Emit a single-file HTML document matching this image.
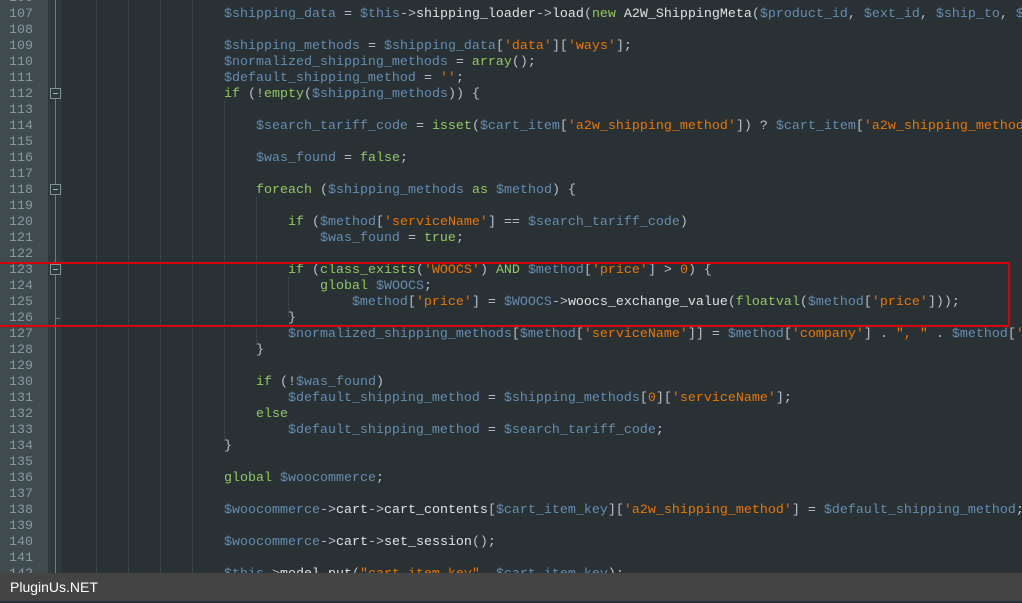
<!DOCTYPE html>
<html><head><meta charset="utf-8"><style>
html,body{margin:0;padding:0;}
body{width:1022px;height:601px;overflow:hidden;background:#293134;position:relative;font-family:"Liberation Mono",monospace;}
#gut{position:absolute;left:0;top:0;width:48px;height:601px;background:#3f4b4e;}
#gut2{position:absolute;left:48px;top:0;width:14px;height:601px;background:#2f393c;}
#vl{position:absolute;left:55px;top:0;width:1px;height:601px;background:#6b7d84;}
.fb{position:absolute;left:50px;width:9px;height:9px;border:1px solid #7f9298;background:#2f393c;}
.fb:after{content:"";position:absolute;left:2px;top:4px;width:5px;height:1px;background:#9fb0b6;}
.tk{position:absolute;left:55px;width:5px;height:1px;background:#6b7d84;}
.g{position:absolute;top:0;height:601px;border-left:1px dotted #46525a;}
.n{position:absolute;left:9px;font-size:13.33px;color:#8a9aa0;line-height:16px;}
.l{position:absolute;left:64px;font-size:13.33px;line-height:16px;white-space:pre;color:#e0e2e4;}
.v{color:#678cb1;}.s{color:#ec7600;}.k{color:#93c763;}.p{color:#b8c0c4;}
#box{position:absolute;left:-2px;top:262px;width:1008px;height:61px;border:2px solid #d6000b;}
#foot{position:absolute;left:0;top:573px;width:1022px;height:28px;background:#444444;color:#fff;font-family:"Liberation Sans",sans-serif;font-size:14px;line-height:28px;padding-left:10px;box-sizing:border-box;}
#c{position:absolute;left:0;top:2px;width:1022px;height:601px;}
</style></head><body>
<div id="gut"></div><div id="gut2"></div><div id="vl"></div>
<div class="g" style="left:96px"></div><div class="g" style="left:128px"></div><div class="g" style="left:160px"></div><div class="g" style="left:192px"></div>
<div class="g" style="left:224px;top:101px;height:340px"></div>
<div class="g" style="left:256px;top:197px;height:148px"></div>
<div class="g" style="left:288px;top:277px;height:40px"></div>
<div class="fb" style="top:88px"></div><div class="fb" style="top:184px"></div><div class="fb" style="top:264px"></div>
<div class="tk" style="top:318px"></div>
<div id="c">
<div class="n" style="top:-11px">106</div>
<div class="n" style="top:5px">107</div><div class="n" style="top:21px">108</div><div class="n" style="top:37px">109</div><div class="n" style="top:53px">110</div><div class="n" style="top:69px">111</div><div class="n" style="top:85px">112</div><div class="n" style="top:101px">113</div><div class="n" style="top:117px">114</div><div class="n" style="top:133px">115</div><div class="n" style="top:149px">116</div><div class="n" style="top:165px">117</div><div class="n" style="top:181px">118</div><div class="n" style="top:197px">119</div><div class="n" style="top:213px">120</div><div class="n" style="top:229px">121</div><div class="n" style="top:245px">122</div><div class="n" style="top:261px">123</div><div class="n" style="top:277px">124</div><div class="n" style="top:293px">125</div><div class="n" style="top:309px">126</div><div class="n" style="top:325px">127</div><div class="n" style="top:341px">128</div><div class="n" style="top:357px">129</div><div class="n" style="top:373px">130</div><div class="n" style="top:389px">131</div><div class="n" style="top:405px">132</div><div class="n" style="top:421px">133</div><div class="n" style="top:437px">134</div><div class="n" style="top:453px">135</div><div class="n" style="top:469px">136</div><div class="n" style="top:485px">137</div><div class="n" style="top:501px">138</div><div class="n" style="top:517px">139</div><div class="n" style="top:533px">140</div><div class="n" style="top:549px">141</div><div class="n" style="top:565px">142</div>

<div class="l" style="top:5px">                    <span class="v">$shipping_data</span> <span class="p">=</span> <span class="v">$this</span><span class="p">-&gt;</span>shipping_loader<span class="p">-&gt;</span>load<span class="p">(</span><span class="k">new</span> A2W_ShippingMeta<span class="p">(</span><span class="v">$product_id</span><span class="p">,</span> <span class="v">$ext_id</span><span class="p">,</span> <span class="v">$ship_to</span><span class="p">,</span> <span class="v">$</span></div>
<div class="l" style="top:37px">                    <span class="v">$shipping_methods</span> <span class="p">=</span> <span class="v">$shipping_data</span><span class="p">[</span><span class="s">'data'</span><span class="p">][</span><span class="s">'ways'</span><span class="p">];</span></div>
<div class="l" style="top:53px">                    <span class="v">$normalized_shipping_methods</span> <span class="p">=</span> <span class="k">array</span><span class="p">();</span></div>
<div class="l" style="top:69px">                    <span class="v">$default_shipping_method</span> <span class="p">=</span> <span class="s">''</span><span class="p">;</span></div>
<div class="l" style="top:85px">                    <span class="k">if</span> <span class="p">(!</span><span class="k">empty</span><span class="p">(</span><span class="v">$shipping_methods</span><span class="p">)) {</span></div>
<div class="l" style="top:117px">                        <span class="v">$search_tariff_code</span> <span class="p">=</span> <span class="k">isset</span><span class="p">(</span><span class="v">$cart_item</span><span class="p">[</span><span class="s">'a2w_shipping_method'</span><span class="p">]) ?</span> <span class="v">$cart_item</span><span class="p">[</span><span class="s">'a2w_shipping_method</span></div>
<div class="l" style="top:149px">                        <span class="v">$was_found</span> <span class="p">=</span> <span class="k">false</span><span class="p">;</span></div>
<div class="l" style="top:181px">                        <span class="k">foreach</span> <span class="p">(</span><span class="v">$shipping_methods</span> <span class="k">as</span> <span class="v">$method</span><span class="p">) {</span></div>
<div class="l" style="top:213px">                            <span class="k">if</span> <span class="p">(</span><span class="v">$method</span><span class="p">[</span><span class="s">'serviceName'</span><span class="p">] ==</span> <span class="v">$search_tariff_code</span><span class="p">)</span></div>
<div class="l" style="top:229px">                                <span class="v">$was_found</span> <span class="p">=</span> <span class="k">true</span><span class="p">;</span></div>
<div class="l" style="top:261px">                            <span class="k">if</span> <span class="p">(</span><span class="k">class_exists</span><span class="p">(</span><span class="s">'WOOCS'</span><span class="p">)</span> <span class="k">AND</span> <span class="v">$method</span><span class="p">[</span><span class="s">'price'</span><span class="p">] &gt; </span><span class="s">0</span><span class="p">) {</span></div>
<div class="l" style="top:277px">                                <span class="k">global</span> <span class="v">$WOOCS</span><span class="p">;</span></div>
<div class="l" style="top:293px">                                    <span class="v">$method</span><span class="p">[</span><span class="s">'price'</span><span class="p">] =</span> <span class="v">$WOOCS</span><span class="p">-&gt;</span>woocs_exchange_value<span class="p">(</span><span class="k">floatval</span><span class="p">(</span><span class="v">$method</span><span class="p">[</span><span class="s">'price'</span><span class="p">]));</span></div>
<div class="l" style="top:309px">                            <span class="p">}</span></div>
<div class="l" style="top:325px">                            <span class="v">$normalized_shipping_methods</span><span class="p">[</span><span class="v">$method</span><span class="p">[</span><span class="s">'serviceName'</span><span class="p">]] =</span> <span class="v">$method</span><span class="p">[</span><span class="s">'company'</span><span class="p">] .</span> <span class="s">", "</span> <span class="p">.</span> <span class="v">$method</span><span class="p">[</span><span class="s">'</span></div>
<div class="l" style="top:341px">                        <span class="p">}</span></div>
<div class="l" style="top:373px">                        <span class="k">if</span> <span class="p">(!</span><span class="v">$was_found</span><span class="p">)</span></div>
<div class="l" style="top:389px">                            <span class="v">$default_shipping_method</span> <span class="p">=</span> <span class="v">$shipping_methods</span><span class="p">[</span><span class="s">0</span><span class="p">][</span><span class="s">'serviceName'</span><span class="p">];</span></div>
<div class="l" style="top:405px">                        <span class="k">else</span></div>
<div class="l" style="top:421px">                            <span class="v">$default_shipping_method</span> <span class="p">=</span> <span class="v">$search_tariff_code</span><span class="p">;</span></div>
<div class="l" style="top:437px">                    <span class="p">}</span></div>
<div class="l" style="top:469px">                    <span class="k">global</span> <span class="v">$woocommerce</span><span class="p">;</span></div>
<div class="l" style="top:501px">                    <span class="v">$woocommerce</span><span class="p">-&gt;</span>cart<span class="p">-&gt;</span>cart_contents<span class="p">[</span><span class="v">$cart_item_key</span><span class="p">][</span><span class="s">'a2w_shipping_method'</span><span class="p">] =</span> <span class="v">$default_shipping_method</span><span class="p">;</span></div>
<div class="l" style="top:533px">                    <span class="v">$woocommerce</span><span class="p">-&gt;</span>cart<span class="p">-&gt;</span>set_session<span class="p">();</span></div>
<div class="l" style="top:565px">                    <span class="v">$this</span><span class="p">-&gt;</span>model_put<span class="p">(</span><span class="s">"cart_item_key"</span><span class="p">,</span> <span class="v">$cart_item_key</span><span class="p">);</span></div>
</div>
<div id="box"></div>
<div id="foot">PluginUs.NET</div>
</body></html>
